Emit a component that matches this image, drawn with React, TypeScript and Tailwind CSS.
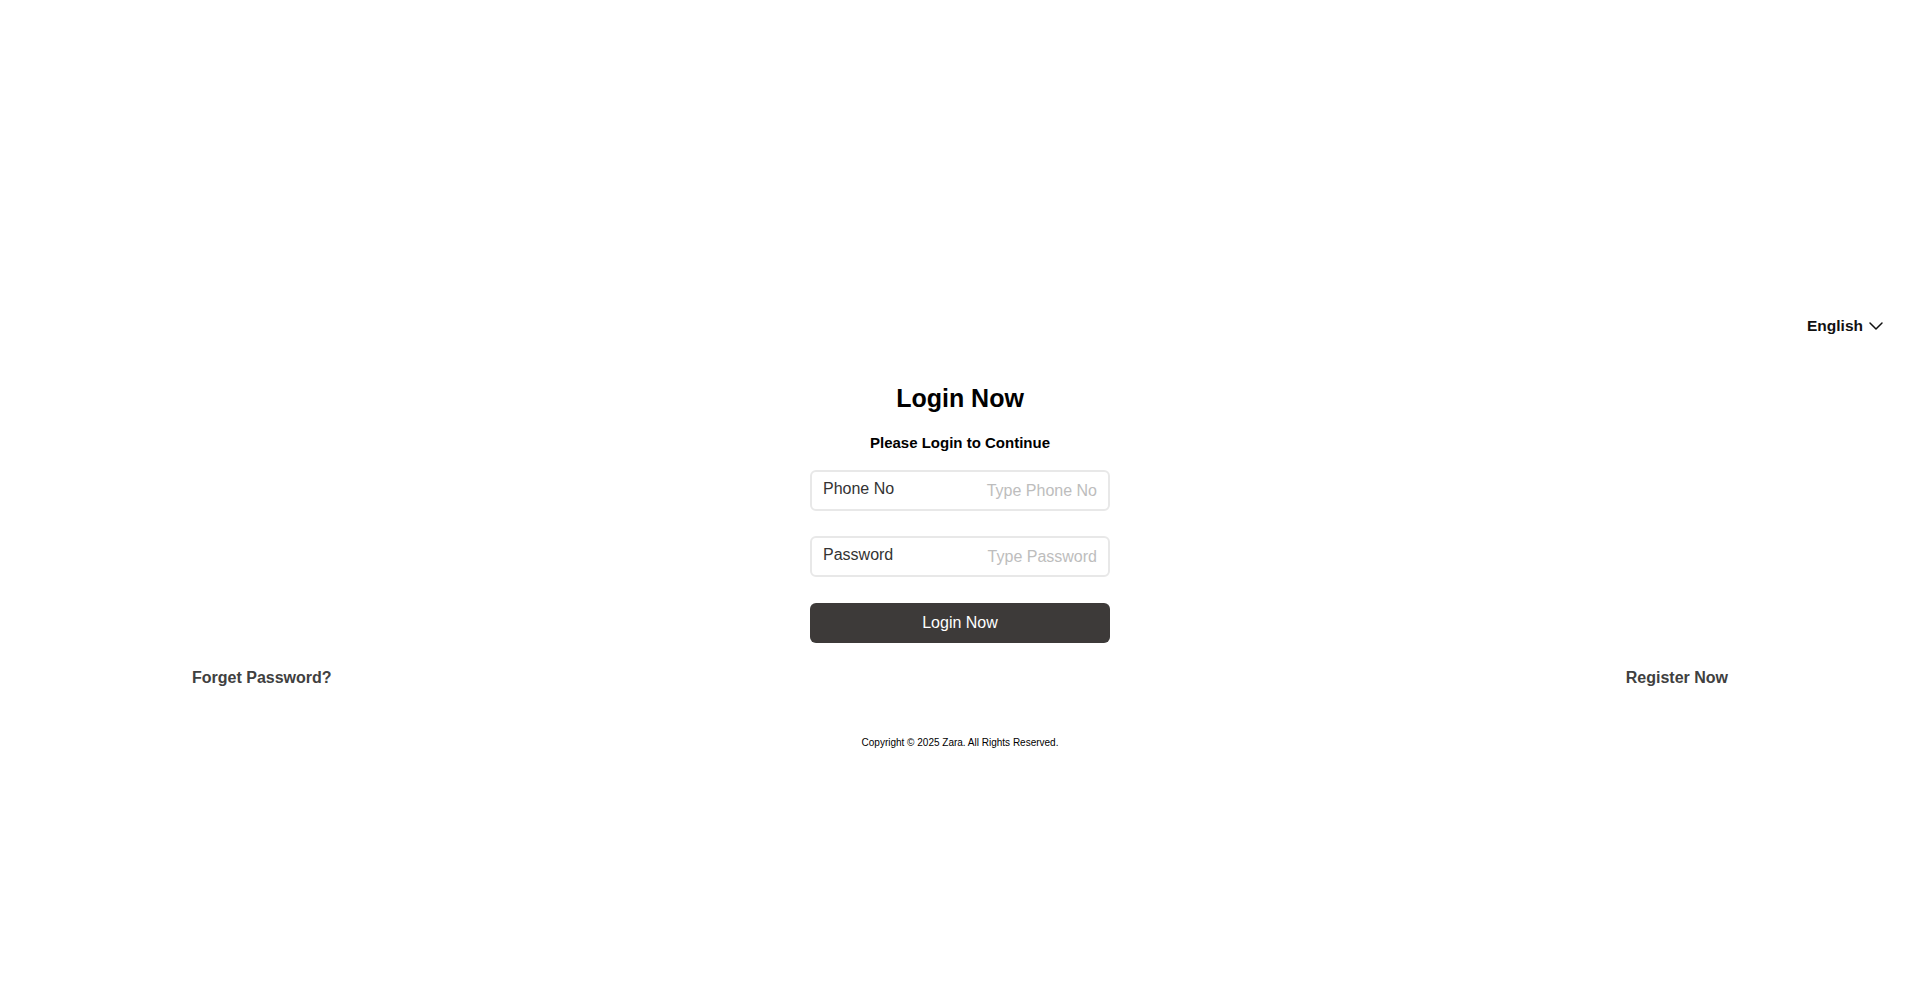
import React, { useState } from 'react';
import { ChevronDown } from 'lucide-react';

// ============================================================================
// Field
// ============================================================================

interface FieldProps {
  label: string;
  placeholder: string;
  type?: string;
  value: string;
  onChange: (value: string) => void;
}

function Field({ label, placeholder, type = 'text', value, onChange }: FieldProps) {
  return (
    <label className="flex items-center h-[41px] border-2 border-[#e8e8e8] rounded-md pl-[11px] pr-[11px] pt-px bg-white">
      <span className="shrink-0 mb-1 text-base leading-6 text-[#333333]">{label}</span>
      <input
        type={type}
        value={value}
        placeholder={placeholder}
        onChange={(e) => onChange(e.target.value)}
        className="flex-1 min-w-0 text-right text-base leading-6 text-[#333333] bg-transparent outline-none placeholder:text-[#bdbdbd]"
      />
    </label>
  );
}

// ============================================================================
// App
// ============================================================================

export default function App() {
  const [phone, setPhone] = useState('');
  const [password, setPassword] = useState('');

  return (
    <div className="min-h-screen bg-white pt-[313.5px] font-['Liberation_Sans',Arial,sans-serif] text-black">
      {/* Language picker */}
      <div className="flex justify-end pr-8">
        <button className="flex items-center gap-px text-[15.5px] leading-6 font-bold text-[#111111]">
          English
          <ChevronDown size={24} strokeWidth={1.5} />
        </button>
      </div>

      {/* Login form */}
      <div className="mt-[44.5px] flex flex-col items-center">
        <h1 className="text-[25px] leading-8 font-bold">Login Now</h1>
        <p className="mt-[18.5px] text-[15px] leading-5 font-bold">Please Login to Continue</p>

        <form className="mt-[17px] w-[300px] flex flex-col gap-[25.5px]" onSubmit={(e) => e.preventDefault()}>
          <Field label="Phone No" placeholder="Type Phone No" value={phone} onChange={setPhone} />
          <Field label="Password" placeholder="Type Password" type="password" value={password} onChange={setPassword} />
          <button
            type="submit"
            className="h-10 w-full rounded-md bg-[#3d3a39] text-white text-base leading-6"
          >
            Login Now
          </button>
        </form>
      </div>

      {/* Links */}
      <div className="mt-[23px] flex justify-between px-[192px]">
        <a href="#" className="text-base leading-6 font-bold text-[#404040]">Forget Password?</a>
        <a href="#" className="text-base leading-6 font-bold text-[#404040]">Register Now</a>
      </div>

      {/* Footer */}
      <p className="mt-[45px] text-center text-[10px] leading-[15px] text-black">
        Copyright © 2025 Zara. All Rights Reserved.
      </p>
    </div>
  );
}
